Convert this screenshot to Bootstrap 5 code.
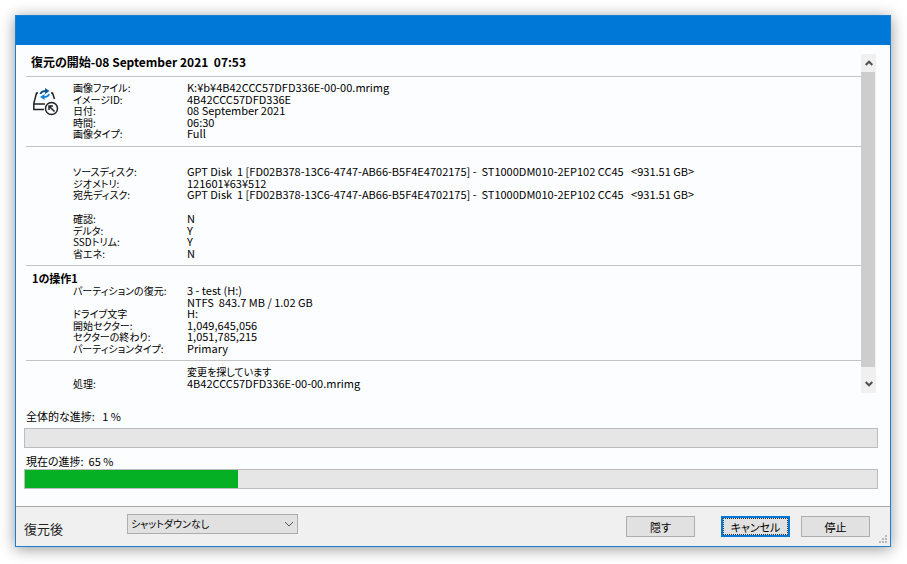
<!DOCTYPE html>
<html lang="ja">
<head>
<meta charset="utf-8">
<meta name="viewport" content="width=device-width, initial-scale=1">
<title>復元の開始</title>
<link href="https://cdn.jsdelivr.net/npm/bootstrap@5.3.0/dist/css/bootstrap.min.css" rel="stylesheet">
<style>
body { font-family: "Noto Sans CJK JP", sans-serif; font-size: 11px; line-height: 12px; font-feature-settings: "palt"; color: #000; background: #fff; padding: 15px 16px 17px 15px; }
.dialog { background: #fcfdfe; border: 1px solid #1b7fd0; box-shadow: 0 2px 14px rgba(0,0,0,.42); }
.titlebar { background: #0078d7; height: 29px; }
.work { padding: 9px 12px 17px 8px; }
.report { margin-left: 2px; }
.report-title { font-size: 12px; line-height: 16px; font-weight: 700; padding-left: 5px; margin-bottom: 6px; white-space: pre; }
.block { border-top: 1px solid #c4c4c4; padding: 5px 0 6px; }
.block-disk { padding-top: 19px; }
.block-last { padding-bottom: 4px; }
.op-title { font-size: 11px; line-height: 14px; font-weight: 700; padding-left: 6px; }
.gutter { width: 47px; padding: 6px 0 0 7px; }
.facts { display: grid; grid-template-columns: 114px minmax(0, 1fr); grid-auto-rows: 12px 11px; font-size: 10px; line-height: 12px; white-space: nowrap; }
.facts dt { font-weight: 400; grid-column: 1; }
.facts dd { grid-column: 2; margin: 0; font-size: 11px; line-height: 10px; white-space: pre; }
.facts .ja { font-size: 10px; line-height: 12px; }
.indent { margin-left: 47px; }
.gap-top { margin-top: 12px; }
.scroller { width: 15px; background: #f0f0f0; margin-right: 2px; }
.scroller button { height: 18px; width: 15px; color: #505050; background: none; }
.scroller .thumb { background: #cdcdcd; margin: 0 1px 8px 0; }
.meter-label { line-height: 16px; padding-left: 2px; white-space: pre; }
.meter-first { margin: 15px 0 4px; }
.meter-second { margin: 5px 0 0; }
.meter { height: 20px; background: #e6e6e6; border: 1px solid #bcbcbc; border-radius: 0; }
.meter .progress-bar { background: #06b025; }
.actions { background: #f0f0f0; border-top: 1px solid #a9a9a9; padding: 7px 20px 9px 8px; }
.after-label { font-size: 13px; line-height: 16px; width: 103px; padding-top: 7px; color: #222; }
.after-select { width: 171px; height: 20px; font-size: 10px; line-height: 16px; padding: 0 20px 0 3px; border: 1px solid #adadad; border-radius: 0; color: #000; background-color: #e1e1e1; background-position: right 3px center; background-size: 10px 6px; font-feature-settings: "palt";
 background-image: url("data:image/svg+xml,%3csvg xmlns='http://www.w3.org/2000/svg' viewBox='0 0 10 6'%3e%3cpath d='M1 1l4 4 4-4' fill='none' stroke='%23555'/%3e%3c/svg%3e"); }
.cmds { gap: 11px; padding-top: 2px; }
.cmd { width: 69px; height: 21px; font-size: 11px; line-height: 18px; padding: 0; border: 1px solid #adadad; border-radius: 0; background: #e1e1e1; color: #000; font-feature-settings: "palt"; }
.cmd-hide { margin-right: 15px; }
.cmd-default { border: 2px solid #0078d7; outline: 1px dotted #333; outline-offset: -3px; line-height: 16px; }
.grip { right: 3px; bottom: 3px; }
</style>
<script src="https://cdn.jsdelivr.net/npm/bootstrap@5.3.0/dist/js/bootstrap.bundle.min.js"></script>
</head>
<body>
<main class="dialog position-relative">
  <header class="titlebar"></header>
  <div class="work">
    <div class="d-flex">
      <section class="report flex-grow-1">
        <h1 class="report-title">復元の開始-08 September 2021  07:53</h1>
        <div class="block d-flex">
          <div class="gutter flex-shrink-0">
            <svg class="d-block" width="26" height="28" viewBox="0 0 26 28" fill="none" stroke="#222" stroke-width="1.5" aria-hidden="true">
              <path d="M5 5H3.500L.8 15.500V21.500H11M1 16H12M18 5h1.500l2 6"/>
              <circle cx="18.500" cy="20.500" r="6"/>
              <path d="M21.500 23.500L16.500 18.500M16 22v-4h4"/>
              <path d="M7.500 6C8 4 9 3 13 3" stroke="#14528c" stroke-width="1.800"/>
              <path d="M12 0l4.500 3L12 6z" fill="#14528c" stroke="none"/>
              <path d="M16 6C15.500 8.500 14 9 10.500 9" stroke="#1683dd" stroke-width="1.800"/>
              <path d="M11.500 6L7 9l4.500 3z" fill="#1683dd" stroke="none"/>
            </svg>
          </div>
          <dl class="facts flex-grow-1 mb-0">
            <dt>画像ファイル:</dt><dd>K:¥b¥4B42CCC57DFD336E-00-00.mrimg</dd>
            <dt>イメージID:</dt><dd>4B42CCC57DFD336E</dd>
            <dt>日付:</dt><dd>08 September 2021</dd>
            <dt>時間:</dt><dd>06:30</dd>
            <dt>画像タイプ:</dt><dd>Full</dd>
          </dl>
        </div>
        <div class="block block-disk">
          <dl class="facts indent mb-0">
            <dt>ソースディスク:</dt><dd>GPT Disk  1 [FD02B378-13C6-4747-AB66-B5F4E4702175] -  ST1000DM010-2EP102 CC45   &lt;931.51 GB&gt;</dd>
            <dt>ジオメトリ:</dt><dd>121601¥63¥512</dd>
            <dt>宛先ディスク:</dt><dd>GPT Disk  1 [FD02B378-13C6-4747-AB66-B5F4E4702175] -  ST1000DM010-2EP102 CC45   &lt;931.51 GB&gt;</dd>
          </dl>
          <dl class="facts indent gap-top mb-0">
            <dt>確認:</dt><dd>N</dd>
            <dt>デルタ:</dt><dd>Y</dd>
            <dt>SSDトリム:</dt><dd>Y</dd>
            <dt>省エネ:</dt><dd>N</dd>
          </dl>
        </div>
        <div class="block">
          <h2 class="op-title mb-0">1の操作1</h2>
          <dl class="facts indent mb-0">
            <dt>パーティションの復元:</dt><dd>3 - test (H:)</dd>
            <dd>NTFS  843.7 MB / 1.02 GB</dd>
            <dt>ドライブ文字</dt><dd>H:</dd>
            <dt>開始セクター:</dt><dd>1,049,645,056</dd>
            <dt>セクターの終わり:</dt><dd>1,051,785,215</dd>
            <dt>パーティションタイプ:</dt><dd>Primary</dd>
          </dl>
        </div>
        <div class="block block-last">
          <dl class="facts indent mb-0">
            <dd class="ja">変更を探しています</dd>
            <dt>処理:</dt><dd>4B42CCC57DFD336E-00-00.mrimg</dd>
          </dl>
        </div>
      </section>
      <div class="scroller d-flex flex-column flex-shrink-0">
        <button type="button" class="border-0 p-0 d-flex align-items-center justify-content-center" aria-label="上へスクロール"><svg width="8" height="6" viewBox="0 0 8 6" fill="none" stroke="currentColor" stroke-width="2"><path d="M.7 5L4 1.700 7.300 5"/></svg></button>
        <div class="thumb flex-grow-1"></div>
        <button type="button" class="border-0 p-0 d-flex align-items-center justify-content-center" aria-label="下へスクロール"><svg width="8" height="6" viewBox="0 0 8 6" fill="none" stroke="currentColor" stroke-width="2"><path d="M.7 1L4 4.300 7.300 1"/></svg></button>
      </div>
    </div>
    <div class="meter-label meter-first" id="total">全体的な進捗:   1 %</div>
    <div class="meter progress" role="progressbar" aria-labelledby="total" aria-valuenow="1" aria-valuemin="0" aria-valuemax="100"></div>
    <div class="meter-label meter-second" id="current">現在の進捗:  65 %</div>
    <div class="meter progress" role="progressbar" aria-labelledby="current" aria-valuenow="65" aria-valuemin="0" aria-valuemax="100"><div class="progress-bar" style="width:25%"></div></div>
  </div>
  <footer class="actions d-flex align-items-start">
    <label class="after-label" for="after">復元後</label>
    <select class="form-select after-select" id="after"><option>シャットダウンなし</option></select>
    <div class="cmds d-flex ms-auto">
      <button type="button" class="btn cmd cmd-hide">隠す</button>
      <button type="button" class="btn cmd cmd-default">キャンセル</button>
      <button type="button" class="btn cmd">停止</button>
    </div>
    <svg class="grip position-absolute" width="8" height="8" viewBox="0 0 8 8" fill="#b8b8b8" aria-hidden="true"><path d="M6 0h2v2H6zM3 3h2v2H3zM6 3h2v2H6zM0 6h2v2H0zM3 6h2v2H3zM6 6h2v2H6z"/></svg>
  </footer>
</main>
</body>
</html>
